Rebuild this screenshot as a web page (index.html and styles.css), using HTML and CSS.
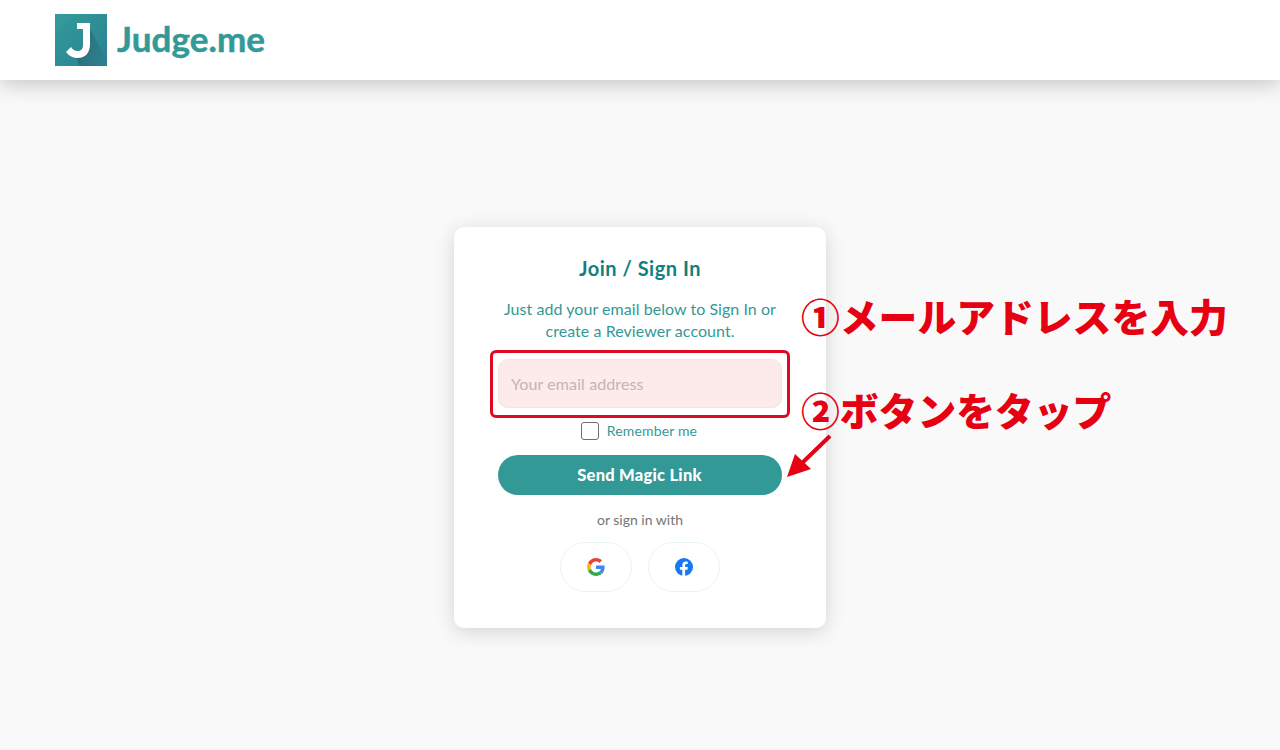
FILE: index.html
```html
<!DOCTYPE html>
<html lang="en">
<head>
    <meta charset="UTF-8">
    <meta name="viewport" content="width=device-width, initial-scale=1.0">
    <title>Judge.me</title>
    <link rel="stylesheet" href="styles.css">
</head>
<body>
    <header class="topbar">
        <a class="logo" href="#">
            <svg class="logo-mark" width="52" height="52" viewBox="0 0 52 52">
                <defs>
                    <linearGradient id="markBg" x1="0" y1="0" x2="1" y2="1">
                        <stop offset="0" stop-color="#339c99"/>
                        <stop offset="1" stop-color="#2b7f93"/>
                    </linearGradient>
                    <linearGradient id="markShade" x1="0" y1="0" x2="1" y2="0.5">
                        <stop offset="0" stop-color="#2a4f5c" stop-opacity="0.75"/>
                        <stop offset="1" stop-color="#2a5f6c" stop-opacity="0.1"/>
                    </linearGradient>
                </defs>
                <rect width="52" height="52" fill="url(#markBg)"/>
                <path d="M35 15 L52 46 V52 H24 L22 44 Z" fill="url(#markShade)"/>
                <path d="M22 9 H35 V30 C35 39 30 44 23 44 C18 44 14 42 11 38 L16 33 C18 36 20 37 23 37 C26 37 28 35 28 30 V15 H22 Z" fill="#fff"/>
            </svg>
            <span class="logo-text">Judge.me</span>
        </a>
    </header>

    <main class="page">
        <div class="card">
            <h1>Join / Sign In</h1>
            <p class="intro">Just add your email below to Sign In or<br>create a Reviewer account.</p>
            <div class="email-wrap">
                <input class="email" type="email" placeholder="Your email address">
                <div class="highlight"></div>
            </div>
            <label class="remember">
                <span class="checkbox"></span>
                <span>Remember me</span>
            </label>
            <button class="send">Send Magic Link</button>
            <p class="or">or sign in with</p>
            <div class="social">
                <a class="social-btn" href="#">
                    <svg width="18" height="18" viewBox="0 0 48 48">
                        <path fill="#ea4335" d="M24 9.5c3.5 0 6.7 1.3 9.2 3.6l6.9-6.9C35.900 2.400 30.400 0 24 0 14.600 0 6.500 5.400 2.600 13.200l8 6.200C12.500 13.600 17.800 9.500 24 9.500z"/>
                        <path fill="#4285f4" d="M47 24.500c0-1.600-.1-3.100-.4-4.500H24v9h13c-.6 3-2.200 5.500-4.800 7.200l7.700 6C44.400 37.900 47 31.800 47 24.500z"/>
                        <path fill="#fbbc05" d="M10.600 28.600c-.5-1.400-.8-3-.8-4.600s.3-3.200.8-4.600l-8-6.200C.9 16.500 0 20.100 0 24s.9 7.500 2.600 10.800l8-6.200z"/>
                        <path fill="#34a853" d="M24 48c6.500 0 11.900-2.100 15.900-5.800l-7.700-6c-2.200 1.400-4.900 2.300-8.200 2.300-6.200 0-11.500-4.100-13.400-9.900l-8 6.200C6.500 42.600 14.600 48 24 48z"/>
                    </svg>
                </a>
                <a class="social-btn" href="#">
                    <svg width="18" height="18" viewBox="0 0 48 48">
                        <circle cx="24" cy="24" r="24" fill="#1877f2"/>
                        <path fill="#fff" d="M33.300 31l1.100-7H27v-4.500c0-1.900.9-3.800 3.900-3.800H34v-6s-2.800-.5-5.400-.5c-5.500 0-9.100 3.300-9.100 9.400V24H13v7h6.500v17c1.200.2 2.500.3 3.800.3s2.500-.1 3.700-.3V31h6.300z"/>
                    </svg>
                </a>
            </div>
        </div>
    </main>

    <!-- red notes drawn over the screenshot -->
    <div class="note note-one">①メールアドレスを入力</div>
    <div class="note note-two">②ボタンをタップ</div>
    <svg class="note-arrow" width="50" height="50" viewBox="0 0 50 50">
        <path d="M45 2 L14 32" stroke="#e60012" stroke-width="4" fill="none"/>
        <path d="M2 43 L10 20 L26 35 Z" fill="#e60012"/>
    </svg>
</body>
</html>
```
FILE: styles.css
```css
* {
    box-sizing: border-box;
}
body {
    margin: 0;
    height: 750px;
    overflow: hidden;
    background: #f9f9f9;
    font-family: "Lato", "Noto Sans", sans-serif;
    color: #339996;
}
.topbar {
    height: 80px;
    padding: 14px 55px;
    background: #fff;
    box-shadow: 0 5px 20px rgba(0, 0, 0, 0.2);
}
.logo {
    display: flex;
    align-items: center;
    gap: 10px;
    text-decoration: none;
}
.logo-text {
    padding-bottom: 4px;
    font-size: 35px;
    font-weight: 700;
    letter-spacing: 0.1px;
    -webkit-text-stroke: 0.5px #339996;
    color: #339996;
}
.page {
    display: flex;
    justify-content: center;
    padding-top: 147px;
}
.card {
    width: 372px;
    height: 401px;
    padding: 29px 44px 0;
    background: #fff;
    border-radius: 10px;
    box-shadow: 0 4px 20px rgba(0, 0, 0, 0.15);
    text-align: center;
}
h1 {
    margin: 0;
    font-size: 20px;
    line-height: 24px;
    font-weight: 700;
    letter-spacing: 0.5px;
    color: #108080;
}
.intro {
    margin: 18px -10px 0;
    font-size: 16px;
    line-height: 22px;
    font-weight: 400;
    letter-spacing: 0.05px;
}
.email-wrap {
    position: relative;
    margin-top: 17px;
}
.email {
    display: block;
    width: 284px;
    height: 49px;
    padding: 0 12px 1px;
    border: 1px solid #f6e3e4;
    border-radius: 10px;
    background: #fdeaea;
    font-family: inherit;
    font-size: 16px;
    letter-spacing: 0.1px;
}
.email::placeholder {
    color: #c3b4b6;
}
.highlight {
    position: absolute;
    left: -8px;
    top: -9px;
    width: 300px;
    height: 68px;
    border: 3px solid #dc0a22;
    border-radius: 6px;
}
.remember {
    display: flex;
    align-items: center;
    justify-content: center;
    gap: 8px;
    margin: 14px 0 0 -2px;
    font-size: 14px;
    line-height: 18px;
    letter-spacing: 0.15px;
}
.checkbox {
    width: 18px;
    height: 18px;
    border: 1px solid #6d6d6d;
    border-radius: 3px;
    background: #fff;
}
.send {
    display: block;
    width: 284px;
    height: 40px;
    margin-top: 15px;
    padding-right: 7px;
    border: none;
    border-radius: 20px;
    background: #339996;
    color: #fff;
    font-family: inherit;
    font-size: 16.500px;
    font-weight: 900;
    letter-spacing: 0.25px;
}
.or {
    margin: 15px 0 0;
    font-size: 14px;
    line-height: 20px;
    color: #757575;
}
.social {
    display: flex;
    justify-content: center;
    gap: 16px;
    margin-top: 12px;
}
.social-btn {
    display: flex;
    align-items: center;
    justify-content: center;
    width: 72px;
    height: 50px;
    border: 1px solid #e8f4f4;
    border-radius: 25px;
    background: #fff;
}
.note {
    position: absolute;
    left: 801px;
    font-family: "Noto Sans CJK JP", sans-serif;
    font-weight: 900;
    font-size: 38.800px;
    line-height: 56px;
    color: #e60012;
    white-space: nowrap;
}
.note-one {
    top: 287px;
}
.note-two {
    top: 381px;
}
.note-arrow {
    position: absolute;
    left: 785px;
    top: 434px;
}
```
